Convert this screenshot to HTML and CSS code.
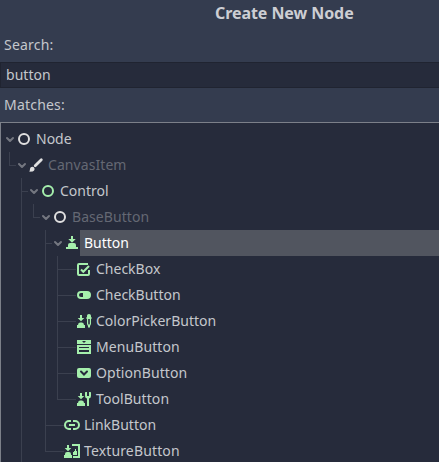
FILE: index.html
```html
<!DOCTYPE html>
<html lang="en">
<head>
<meta charset="utf-8">
<title>Create New Node</title>
<link rel="stylesheet" href="styles.css">
</head>
<body>
<svg class="defs" width="0" height="0">
  <symbol id="arrow" viewBox="0 0 12 12"><path d="M3 5 6 8l3-3" fill="none" stroke="#747780" stroke-width="2" stroke-linecap="round" stroke-linejoin="round"/></symbol>
  <symbol id="ring" viewBox="0 0 16 16"><circle cx="8" cy="8" r="5" fill="none" stroke="currentColor" stroke-width="2"/></symbol>
  <symbol id="brush" viewBox="0 0 16 16"><path d="M13.300 2.700 7.200 8.800" fill="none" stroke="currentColor" stroke-width="2.800" stroke-linecap="round"/><path d="M4.300 9.800a2.300 2.300 0 0 1 1.800 3.700C5 14.800 3 14.800 1 14.500c1-.7.8-1.500 1-2.600.2-1.200 1.200-2.100 2.300-2.100z" fill="currentColor"/></symbol>
  <symbol id="button" viewBox="0 0 16 16"><path d="M7 1h2v3h2.700L8 7.700 4.300 4H7zM4 11V10q0-2 2-2h4q2 0 2 2v1zM2 12h12v2H2z" fill="currentColor"/><path d="M4 11h8v1H4z" fill="currentColor"/></symbol>
  <symbol id="checkbox" viewBox="0 0 16 16"><path d="M12 3H3Q2 3 2 4v9q0 1 1 1h9q1 0 1-1V9" fill="none" stroke="currentColor" stroke-width="2"/><path d="M5 8.500 7.300 10.800 13 5" fill="none" stroke="currentColor" stroke-width="2"/></symbol>
  <symbol id="switch" viewBox="0 0 16 16"><path fill-rule="evenodd" d="M5 4h6a4 4 0 0 1 0 8H5a4 4 0 0 1 0-8zm0 2a2 2 0 0 0 0 4h2V6z" fill="currentColor"/></symbol>
  <symbol id="press" viewBox="0 0 16 16"><path d="M4 2h2v3h2.300L5 8.300 1.700 5H4zM2 12q0-2.500 2-2.500h2q2 0 2 2.500h1v3H1v-3z" fill="currentColor"/></symbol>
  <symbol id="picker" viewBox="0 0 16 16"><use href="#press"/><path fill-rule="evenodd" d="M13 1c1.300 0 2 .8 2 2v1h.5v2H15v5l-1 2v1.500h-2V13l-1-2V6h-.5V4h.5V3c0-1.200.7-2 2-2zm-.8 5v4.500l.3 1h1l.3-1V6z" fill="currentColor"/></symbol>
  <symbol id="menu" viewBox="0 0 16 16"><path fill-rule="evenodd" d="M1 1h14v4H1zm5 1 2 2 2-2zM1 6h14v9H1zm2 2v1h10V8zm0 3v2h10v-2z" fill="currentColor"/></symbol>
  <symbol id="option" viewBox="0 0 16 16"><rect x="1" y="3" width="14" height="10" rx="2" fill="currentColor"/><path d="m5 6.500 3 3 3-3" fill="none" stroke="#262b3b" stroke-width="2" stroke-linecap="round"/></symbol>
  <symbol id="tool" viewBox="0 0 16 16"><use href="#press"/><path d="M9.500 1H11v4h2V1h1.500q.5 0 .5 1v3q0 2-2 2.500V15h-2V7.500Q9 7 9 5V2q0-1 .5-1z" fill="currentColor"/></symbol>
  <symbol id="link" viewBox="0 0 16 16"><path d="M7 4H5a4 4 0 0 0 0 8h2M9 4h2a4 4 0 0 1 0 8H9M5 8h6" fill="none" stroke="currentColor" stroke-width="2"/></symbol>
  <symbol id="texture" viewBox="0 0 16 16"><path d="M3 2h2v3h2.300L4 8.300.7 5H3zM1 12V11q0-2 2-2h2q2 0 2 2v1h1v3H0v-3z" fill="currentColor"/><path d="M8 1h8v14H9v-2h5V3H8zM9 12V9h1V8h1V6h1v2h1v4z" fill="currentColor"/></symbol>
</svg>
<main class="dialog">
  <h1 class="title">Create New Node</h1>
  <label class="label" for="search">Search:</label>
  <input class="search" id="search" type="text" value="button">
  <div class="label matches">Matches:</div>
  <div class="tree">
    <div class="row"><svg class="arrow"><use href="#arrow"/></svg><svg class="icon light"><use href="#ring"/></svg><span class="name">Node</span></div>
    <div class="row"><i class="guide last"></i><svg class="arrow"><use href="#arrow"/></svg><svg class="icon light"><use href="#brush"/></svg><span class="name muted">CanvasItem</span></div>
    <div class="row"><i class="guide none"></i><i class="guide branch"></i><svg class="arrow"><use href="#arrow"/></svg><svg class="icon"><use href="#ring"/></svg><span class="name">Control</span></div>
    <div class="row"><i class="guide none"></i><i class="guide"></i><i class="guide last"></i><svg class="arrow"><use href="#arrow"/></svg><svg class="icon light"><use href="#ring"/></svg><span class="name muted">BaseButton</span></div>
    <div class="row"><i class="guide none"></i><i class="guide"></i><i class="guide none"></i><i class="guide branch"></i><svg class="arrow"><use href="#arrow"/></svg><svg class="icon"><use href="#button"/></svg><span class="name selected">Button</span></div>
    <div class="row"><i class="guide none"></i><i class="guide"></i><i class="guide none"></i><i class="guide"></i><i class="guide branch leaf"></i><svg class="icon"><use href="#checkbox"/></svg><span class="name">CheckBox</span></div>
    <div class="row"><i class="guide none"></i><i class="guide"></i><i class="guide none"></i><i class="guide"></i><i class="guide branch leaf"></i><svg class="icon"><use href="#switch"/></svg><span class="name">CheckButton</span></div>
    <div class="row"><i class="guide none"></i><i class="guide"></i><i class="guide none"></i><i class="guide"></i><i class="guide branch leaf"></i><svg class="icon"><use href="#picker"/></svg><span class="name">ColorPickerButton</span></div>
    <div class="row"><i class="guide none"></i><i class="guide"></i><i class="guide none"></i><i class="guide"></i><i class="guide branch leaf"></i><svg class="icon"><use href="#menu"/></svg><span class="name loose">MenuButton</span></div>
    <div class="row"><i class="guide none"></i><i class="guide"></i><i class="guide none"></i><i class="guide"></i><i class="guide branch leaf"></i><svg class="icon"><use href="#option"/></svg><span class="name loose">OptionButton</span></div>
    <div class="row"><i class="guide none"></i><i class="guide"></i><i class="guide none"></i><i class="guide"></i><i class="guide last leaf"></i><svg class="icon"><use href="#tool"/></svg><span class="name loose">ToolButton</span></div>
    <div class="row"><i class="guide none"></i><i class="guide"></i><i class="guide none"></i><i class="guide branch leaf"></i><svg class="icon"><use href="#link"/></svg><span class="name">LinkButton</span></div>
    <div class="row"><i class="guide none"></i><i class="guide"></i><i class="guide none"></i><i class="guide last leaf"></i><svg class="icon"><use href="#texture"/></svg><span class="name looser">TextureButton</span></div>
  </div>
</main>
</body>
</html>
```
FILE: styles.css
```css
* { box-sizing: border-box; }
body {
  margin: 0;
  height: 462px;
  overflow: hidden;
  background: #343c4f;
  color: #c4c7cc;
  font: 14px/20px "Noto Sans", sans-serif;
}
.defs { position: absolute; }
.dialog { display: flex; flex-direction: column; height: 462px; }
.title {
  margin: 0 0 0 215px;
  height: 27px;
  font-size: 16px;
  line-height: 26px;
  font-weight: 700;
  letter-spacing: -0.07px;
  color: #cdced3;
}
.label { height: 35px; padding: 8px 4px 0; letter-spacing: 0.2px; }
.search {
  display: block;
  width: 100%;
  height: 26px;
  padding: 0 5px 2px;
  border: 1px solid #202431;
  border-right: 0;
  border-radius: 0;
  outline: 0;
  background: #262b3b;
  color: inherit;
  font: inherit;
  letter-spacing: 0.05px;
}
.matches { height: 34px; padding-top: 7px; }
.tree {
  flex: 1;
  overflow: hidden;
  padding: 3px 0 0 3px;
  border: solid #7c8089;
  border-width: 1px 0 0 1px;
  background: #262b3b;
}
.row { display: flex; align-items: center; height: 26px; }
.guide {
  flex: none;
  width: 12px;
  height: 26px;
  background: linear-gradient(#3b404f, #3b404f) 5px 0 / 1px 26px no-repeat;
}
.guide.none { background: none; }
.guide.branch, .guide.last {
  background:
    linear-gradient(#3b404f, #3b404f) 5px 0 / 1px 26px no-repeat,
    linear-gradient(#3b404f, #3b404f) 5px 13px / 100% 1px no-repeat;
}
.guide.last { background-size: 1px 14px, 100% 1px; }
.guide.leaf { width: 24px; }
.arrow { flex: none; width: 12px; height: 12px; }
.icon { flex: none; width: 16px; height: 16px; color: #a5efac; }
.icon.light { color: #e0e0e0; }
.name { flex: 1; height: 26px; padding-left: 4px; line-height: 26px; white-space: nowrap; }
.loose { letter-spacing: 0.08px; }
.looser { letter-spacing: 0.14px; }
.muted { color: #646873; letter-spacing: 0.07px; }
.selected { background: #51555f; color: #fff; }
```
